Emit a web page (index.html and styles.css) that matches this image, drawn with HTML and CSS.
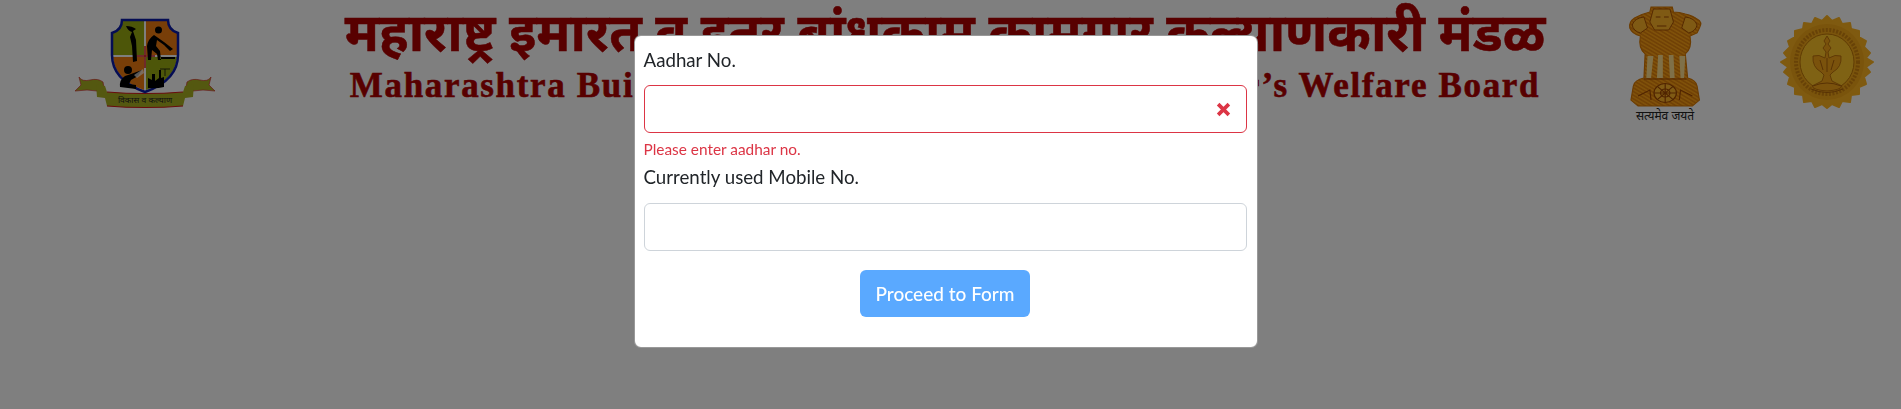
FILE: index.html
```html
<!DOCTYPE html>
<html lang="mr">
<head>
<meta charset="utf-8">
<title>Maharashtra Building and Other Construction Worker's Welfare Board</title>
<link rel="stylesheet" href="styles.css">
</head>
<body>
<header class="site-header">
  <div class="logo-cell">
    <svg class="board-logo" viewBox="0 0 170 100" width="170" height="100">
      <g class="ribbon">
        <path class="ribbon-end" d="M19 67 Q22 72 30 70 Q38 68 43 72 L44 78 L38 78 L37 81 Q28 79 15 81 L21 75 Z"/>
        <path class="ribbon-end" d="M151 67 Q148 72 140 70 Q132 68 127 72 L126 78 L132 78 L133 81 Q142 79 155 81 L149 75 Z"/>
        <path class="ribbon-main" d="M36 74 L45 76 L47 82 Q85 85 123 82 L125 76 L134 74 L133 87 L125 88 L123 96 Q85 99 47 96 L45 88 L37 87Z"/>
        <path class="ribbon-edge" d="M47 82 Q85 85 123 82 M47 96 Q85 99 123 96"/>
        <text class="ribbon-text" x="85" y="93">विकास व कल्याण</text>
      </g>
      <path class="shield-q olive" d="M62 10 H84 V45 H53 V23 Q62 20 62 10Z"/>
      <path class="shield-q orange" d="M86 10 H108 Q108 20 117 23 V45 H86Z"/>
      <path class="shield-q orange" d="M53 47 H84 V80 Q55 70 53 47Z"/>
      <path class="shield-q olive" d="M86 47 H117 Q115 70 86 80Z"/>
      <path class="shield-rim" d="M62 10 H108 Q108 20 118 23 V45 Q118 70 85 82 Q52 70 52 45 V23 Q62 20 62 10Z"/>
      <path class="divider" d="M54 46 H116 M85 12 V80"/>
      <path class="cross" d="M75 46 H95 M85 36 V58"/>
      <path class="black" d="M66 16 Q72 16 76 19 L73 21 L76 30 L77 51 L73 52 L72 36 L70 27 L72 22 Q68 21 66 16Z"/>
      <path class="black" d="M102 20 a3.500 3.500 0 1 1 -7 0 a3.500 3.500 0 1 1 7 0Z M94 25 Q88 29 87 36 L88 50 L91 50 L92 40 L97 44 L98 50 L101 50 L100 41 L96 36 L97 30 L104 35 L110 41 L113 39 L104 32 Z M100 47 H115 V49 H100Z"/>
      <path class="black" d="M72 60 a4 4 0 1 1 -8 0 a4 4 0 1 1 8 0Z M65 66 Q59 70 60 77 L76 79 L76 75 L69 74 L71 70 L78 66 L82 60 L71 64 Z"/>
      <path class="book" d="M74 65 L83 59 L84 63 L77 68Z"/>
      <path class="black" d="M88 78 V68 L92 70 V64 L95 64 V71 L99 68 V60 H101 V68 L104 67 V77 Q96 79 88 78Z"/>
      <path class="thin" d="M100 59 H110 M105 59 V66"/>
    </svg>
  </div>
  <div class="title-cell">
    <h1 class="title-mr">महाराष्ट्र इमारत व इतर बांधकाम कामगार कल्याणकारी मंडळ</h1>
    <p class="title-en">Maharashtra Building and Other Construction Worker’s Welfare Board</p>
  </div>
  <div class="emblem-cell">
    <svg class="emblem" viewBox="0 0 90 125" width="90" height="125">
      <defs>
        <pattern id="fur" width="3" height="3" patternUnits="userSpaceOnUse" patternTransform="rotate(35)">
          <rect width="3" height="3" fill="#ffa214"/>
          <path d="M0 1.500H3" stroke="#b85400" stroke-width=".6"/>
        </pattern>
      </defs>
      <g transform="translate(-2 0) scale(1.18 1)">
        <path class="em-fur" d="M27 12 L28 7 H46 L47 12 Q52 12 57 14 Q64 16 67 19 Q72 22 69 28 L67 33 L61 36 Q63 48 57 54 L59 78 Q66 80 67 86 L69 100 L63 106 H17 L11 100 L13 86 Q14 80 22 78 L23 54 Q17 48 19 36 Q12 34 10 28 Q9 22 14 18 Q20 14 27 12Z"/>
        <path class="em-light" d="M25 56 L24 78 H28 L30 56Z M34 55 L33 78 H38 L38 55Z M43 55 L44 78 H48 L47 55Z M52 56 L53 78 H56 L57 56Z"/>
        <path class="em-dark" d="M22 79 H58"/>
        <path class="em-face" d="M30 9 H44 L47 22 L43 30 H31 L27 22Z"/>
        <path class="em-dark" d="M32 17 H36 M39 17 H43 M33 26 H41"/>
        <path class="em-face" d="M12 25 Q14 18 22 17 L25 28 L19 33 Q13 31 12 25Z M67 25 Q65 18 57 17 L54 28 L60 33 Q66 31 67 25Z"/>
        <circle class="em-wheel" cx="40" cy="93" r="9.500"/>
        <circle class="em-wheel" cx="40" cy="93" r="4"/>
        <path class="em-dark" d="M30.500 93 H49.500 M40 83.500 V102.500 M33.300 86.300 L46.700 99.700 M46.700 86.300 L33.300 99.700 M17 96 L27 90 L28 100 M63 96 L53 90 L52 100"/>
      </g>
      <text class="em-text" x="45" y="120">सत्यमेव जयते</text>
    </svg>
    <svg class="seal" viewBox="0 0 96 96" width="96" height="96">
      <path class="seal-edge" d="M48 2 L53 7 L60 4 L63 10 L71 9 L72 15 L80 17 L80 23 L87 27 L85 33 L91 39 L87 44 L94 48 L87 53 L91 58 L85 63 L87 70 L80 73 L80 80 L72 81 L71 88 L63 87 L60 93 L53 90 L48 94 L43 90 L36 93 L33 87 L25 88 L24 81 L16 80 L16 73 L9 70 L11 63 L5 58 L9 53 L2 48 L9 44 L5 39 L11 33 L9 27 L16 23 L16 17 L24 15 L25 9 L33 10 L36 4 L43 7Z"/>
      <ellipse class="seal-ring" cx="48" cy="48" rx="37" ry="38"/>
      <ellipse class="seal-text-ring" cx="48" cy="48" rx="31" ry="32"/>
      <ellipse class="seal-inner" cx="48" cy="48" rx="27" ry="28"/>
      <path class="seal-lamp" d="M48 22 L51 27 L49 30 L52 34 L49 38 L50 44 Q56 40 62 42 Q63 53 54 58 L51 61 L53 67 L63 72 Q62 76 48 77 Q34 76 33 72 L43 67 L45 61 L42 58 Q33 53 34 42 Q40 40 46 44 L47 38 L44 34 L47 30 L45 27Z"/>
      <path class="seal-line" d="M34 72 Q48 66 62 72 M32 75 Q48 82 64 75 M41 46 L44 56 M55 46 L52 56 M48 44 V58"/>
    </svg>
  </div>
</header>

<div class="overlay">
  <form class="modal">
    <div class="field">
      <label class="label" for="aadhar">Aadhar No.</label>
      <div class="input-wrap">
        <input class="input input-error" id="aadhar" type="text">
        <svg class="error-icon" viewBox="0 0 14 14" width="15" height="15"><path d="M2 2 L12 12 M12 2 L2 12"/></svg>
      </div>
      <div class="error-text">Please enter aadhar no.</div>
    </div>
    <div class="field">
      <label class="label" for="mobile">Currently used Mobile No.</label>
      <input class="input" id="mobile" type="text">
    </div>
    <div class="actions">
      <button class="btn" type="button">Proceed to Form</button>
    </div>
  </form>
</div>
</body>
</html>
```
FILE: styles.css
```css
* { box-sizing: border-box; }
html, body { margin: 0; height: 100%; }
body {
  background: #fff;
  overflow: hidden;
  font-family: Lato, "Noto Sans", sans-serif;
  color: #212529;
}
.site-header {
  display: grid;
  grid-template-columns: 290px 1310px 301px;
  height: 130px;
}
.logo-cell { padding: 10px 0 0 60px; }
.board-logo, .emblem, .seal { display: block; }
.title-cell { text-align: center; white-space: nowrap; }
.title-mr {
  margin: 0;
  font: 700 52.500px/62px "Noto Sans", "Noto Serif Devanagari", serif;
  -webkit-text-stroke: .5px #b00000;
  color: #b00000;
}
.title-en {
  margin: 4px 0 0;
  font: 700 35px/40px "Liberation Serif", serif;
  letter-spacing: 1.660px;
  -webkit-text-stroke: .6px #b00000;
  color: #b00000;
}
.emblem-cell { display: flex; padding: 0 0 0 20px; }
.seal { margin: 14px 0 0 69px; }
.ribbon-end { fill: #a8b020; stroke: #d03030; stroke-width: .7; }
.ribbon-main { fill: #a8b020; }
.ribbon-edge { fill: none; stroke: #d01818; stroke-width: 1.200; }
.ribbon-text { font: 400 8.500px "Noto Sans", sans-serif; fill: #222; text-anchor: middle; }
.olive { fill: #9aac12; }
.orange { fill: #f07c10; }
.shield-rim { fill: none; stroke: #0a1aa8; stroke-width: 2.500; }
.divider { stroke: #fff; stroke-width: 1; fill: none; opacity: .7; }
.cross { stroke: #d81e1e; stroke-width: 1.500; fill: none; }
.black { fill: #000; }
.book { fill: #fff; opacity: .7; }
.thin { stroke: #111; stroke-width: .8; fill: none; }
.em-fur { fill: url(#fur); stroke: #d87800; stroke-width: 1; }
.em-light { fill: #ffe090; }
.em-dark { stroke: #a04800; stroke-width: 1; fill: none; }
.em-face { fill: #ffb428; stroke: #a04800; stroke-width: .8; }
.em-wheel { fill: #ffb428; stroke: #a04800; stroke-width: 1; }
.em-text { font: 400 12px "Noto Sans", sans-serif; fill: #222; text-anchor: middle; }
.seal-edge { fill: #ffb420; stroke: #ffb420; stroke-width: 2; stroke-linejoin: round; }
.seal-ring { fill: #f4a818; }
.seal-text-ring { fill: none; stroke: #b86c08; stroke-width: 4; stroke-dasharray: 2 1.500; opacity: .6; }
.seal-inner { fill: #ffc428; stroke: #c07808; stroke-width: 1; }
.seal-lamp { fill: #f4a418; stroke: #b06408; stroke-width: .8; }
.seal-line { fill: none; stroke: #b06408; stroke-width: 1; }

.overlay {
  position: fixed;
  inset: 0;
  display: flex;
  justify-content: center;
  align-items: flex-start;
  padding: 35px 10px 0 0;
  background: rgba(0, 0, 0, .5);
}
.modal {
  width: 624px;
  height: 313px;
  padding: 9px 10px 9px 9px;
  background: #fff;
  border: 1px solid rgba(0, 0, 0, .4);
  border-radius: 7px;
}
.label { display: block; font-size: 18.700px; line-height: 30px; margin-bottom: 10px; }
.input-wrap { position: relative; }
.input {
  display: block;
  width: 100%;
  height: 48px;
  padding: 6px 12px;
  background: #fff;
  border: 1px solid #ced4da;
  border-radius: 6px;
  outline: 0;
}
.input-error { border-color: #dc3545; }
.error-icon { position: absolute; right: 16px; top: 17px; }
.error-icon path { stroke: #dc3545; stroke-width: 3.400; fill: none; }
.error-text { margin-top: 6px; font-size: 15.400px; line-height: 20px; color: #dc3545; }
.field + .field .label { margin-top: 3px; margin-bottom: 11px; }
.actions { display: flex; justify-content: center; margin-top: 19px; }
.btn {
  width: 170px;
  height: 47px;
  background: #5aa9ff;
  border: 0;
  border-radius: 6px;
  color: #fff;
  font: 500 19px/28px Lato, "Noto Sans", sans-serif;
  padding: 0;
}
```
